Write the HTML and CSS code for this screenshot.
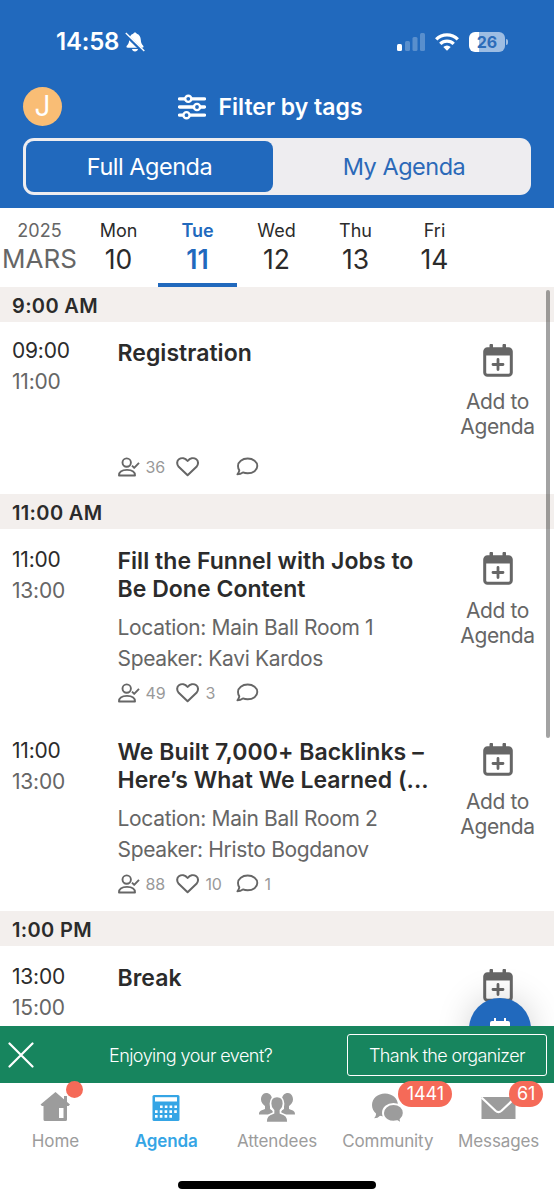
FILE: index.html
```html
<!DOCTYPE html>
<html lang="en">
<head>
    <meta charset="UTF-8">
    <title>Agenda</title>
    <link rel="stylesheet" href="styles.css">
</head>
<body>
    <!-- shared icons -->
    <svg class="sprite">
        <symbol id="cal-add" viewBox="0 0 30 34">
            <path d="M7 1.500h2.500v4.500H7zM20 1.500h2.500v4.500H20z" stroke="currentColor" stroke-width="1"/>
            <rect x="1.700" y="5.700" width="26.600" height="26.600" rx="2.800" fill="none" stroke="currentColor" stroke-width="3"/>
            <path d="M1.500 6h27v6.500h-27z"/>
            <path d="M15 16.500v10M10 21.500h10" stroke="currentColor" stroke-width="2.800" stroke-linecap="round"/>
        </symbol>
        <symbol id="person" viewBox="0 0 22 20">
            <g fill="none" stroke="currentColor" stroke-width="1.900" stroke-linejoin="round">
                <circle cx="8.700" cy="5.600" r="4.200"/>
                <path d="M1 18.500c0-3.800 3-5.600 8-5.600s8 1.800 8 5.600z"/>
                <path d="M14 8.700l2.200 2.200 4.800-5"/>
            </g>
        </symbol>
        <symbol id="heart" viewBox="0 0 24 20">
            <path d="M11.600 18.300L2.700 9.800C.5 7.200.8 3.800 2.900 2.300 5.600.3 9.200 1 11.600 4c2.400-3 6-3.700 8.700-1.700 2.100 1.500 2.400 4.900.2 7.500z" fill="none" stroke="currentColor" stroke-width="2" stroke-linejoin="round"/>
        </symbol>
        <symbol id="comment" viewBox="0 0 23 20">
            <path d="M11.700 1.500c5.500 0 9.600 3.300 9.600 7.400s-4.100 7.400-9.600 7.400c-1.800 0-3.400-.3-4.800-.9-1.600 1.200-3.600 1.900-5.500 1.900 1.100-1.200 1.700-2.600 1.900-4C2.500 12 2 10.500 2 8.900c0-4.100 4.200-7.400 9.700-7.400z" fill="none" stroke="currentColor" stroke-width="1.900" stroke-linejoin="round"/>
        </symbol>
    </svg>

    <header class="header">
        <div class="status">
            <span class="clock">14:58</span>
            <svg class="bell" viewBox="0 0 20 20">
                <path d="M10 .5c.9 0 1.600.6 1.700 1.300 2.600.8 4 3 4.100 6 .1 3.500 1.200 4.500 2.400 6 .8 1.100.2 2-1 2H2.800c-1.200 0-1.800-.9-1-2 1.200-1.500 2.300-2.500 2.400-6 .1-3 1.500-5.200 4.100-6C8.400 1.100 9.100.5 10 .5zM7 17h6c-.2 1.600-1.400 2.500-3 2.500S7.200 18.600 7 17z"/>
                <path d="M0 2l18.500 18" stroke="#2169bd" stroke-width="3.200"/>
                <path d="M.8 1l18.500 18" stroke="#fff" stroke-width="1.400"/>
            </svg>
            <svg class="signal" viewBox="0 0 28 18">
                <rect y="11" width="5" height="7" rx="1.500"/>
                <g opacity=".25">
                    <rect x="8" y="8" width="5" height="10" rx="1.500"/>
                    <rect x="15.500" y="4" width="5" height="14" rx="1.500"/>
                    <rect x="23" width="5" height="18" rx="1.500"/>
                </g>
            </svg>
            <svg class="wifi" viewBox="0 0 24 18">
                <g fill="none" stroke="#fff" stroke-width="3.300">
                    <path d="M1.200 6.400a15.300 15.300 0 0 1 21.600 0"/>
                    <path d="M5.300 10.800a9.500 9.500 0 0 1 13.400 0"/>
                </g>
                <path d="M8.300 14a5.300 5.300 0 0 1 7.400 0L12 17.700z"/>
            </svg>
            <span class="battery">26</span>
        </div>
        <div class="topbar">
            <span class="avatar">J</span>
            <div class="filter">
                <svg class="sliders" viewBox="0 0 28 26">
                    <path d="M1.500 4.800h25M1.500 13h25M1.500 21.200h25" stroke="#fff" stroke-width="3.300" stroke-linecap="round"/>
                    <g fill="#2169bd" stroke="#fff" stroke-width="2.400">
                        <circle cx="10.300" cy="4.800" r="3.100"/>
                        <circle cx="19" cy="13" r="3.100"/>
                        <circle cx="8.500" cy="21.200" r="3.100"/>
                    </g>
                </svg>
                <span>Filter by tags</span>
            </div>
        </div>
        <div class="switch">
            <div class="switch-item selected">Full Agenda</div>
            <div class="switch-item other">My Agenda</div>
        </div>
    </header>

    <nav class="days">
        <div class="day month"><span>2025</span><b>MARS</b></div>
        <div class="day"><span>Mon</span><b>10</b></div>
        <div class="day active"><span>Tue</span><b>11</b></div>
        <div class="day"><span>Wed</span><b>12</b></div>
        <div class="day"><span>Thu</span><b>13</b></div>
        <div class="day"><span>Fri</span><b>14</b></div>
    </nav>

    <main class="agenda">
        <h3 class="slot">9:00 AM</h3>
        <div class="session short">
            <div class="times"><div>09:00</div><div class="end">11:00</div></div>
            <div class="info">
                <h2>Registration</h2>
                <div class="stats">
                    <span><svg class="i-person"><use href="#person"/></svg>36</span>
                    <span><svg class="i-heart"><use href="#heart"/></svg></span>
                    <span><svg class="i-comment"><use href="#comment"/></svg></span>
                </div>
            </div>
            <div class="add"><svg><use href="#cal-add"/></svg>Add to<br>Agenda</div>
        </div>

        <h3 class="slot">11:00 AM</h3>
        <div class="session">
            <div class="times"><div>11:00</div><div class="end">13:00</div></div>
            <div class="info">
                <h2>Fill the Funnel with Jobs to<br>Be Done Content</h2>
                <p>Location: Main Ball Room 1</p>
                <p>Speaker: Kavi Kardos</p>
                <div class="stats">
                    <span><svg class="i-person"><use href="#person"/></svg>49</span>
                    <span><svg class="i-heart"><use href="#heart"/></svg>3</span>
                    <span><svg class="i-comment"><use href="#comment"/></svg></span>
                </div>
            </div>
            <div class="add"><svg><use href="#cal-add"/></svg>Add to<br>Agenda</div>
        </div>
        <div class="session">
            <div class="times"><div>11:00</div><div class="end">13:00</div></div>
            <div class="info">
                <h2>We Built 7,000+ Backlinks –<br>Here’s What We Learned (...</h2>
                <p>Location: Main Ball Room 2</p>
                <p>Speaker: Hristo Bogdanov</p>
                <div class="stats">
                    <span><svg class="i-person"><use href="#person"/></svg>88</span>
                    <span><svg class="i-heart"><use href="#heart"/></svg>10</span>
                    <span><svg class="i-comment"><use href="#comment"/></svg>1</span>
                </div>
            </div>
            <div class="add"><svg><use href="#cal-add"/></svg>Add to<br>Agenda</div>
        </div>

        <h3 class="slot">1:00 PM</h3>
        <div class="session">
            <div class="times"><div>13:00</div><div class="end">15:00</div></div>
            <div class="info"><h2>Break</h2></div>
            <div class="add"><svg><use href="#cal-add"/></svg></div>
        </div>

        <div class="fab">
            <svg viewBox="0 0 20 22"><path d="M4 0h2v3h8V0h2v3h2a2 2 0 0 1 2 2v15H0V5a2 2 0 0 1 2-2h2z"/></svg>
        </div>
        <div class="scrollbar"></div>
    </main>

    <div class="banner">
        <svg class="close" viewBox="0 0 26 26"><path d="M1.500 1.500l23 23M24.500 1.500l-23 23" stroke="#fff" stroke-width="2.200" stroke-linecap="round"/></svg>
        <span class="question">Enjoying your event?</span>
        <button class="thank">Thank the organizer</button>
    </div>

    <footer class="tabs">
        <div class="tab">
            <svg viewBox="0 0 44 36">
                <path d="M22.500 4L37 16.500 35.500 18H34v13.500a1.500 1.500 0 0 1-1.500 1.500H12a1.500 1.500 0 0 1-1.500-1.500V18H9l-1.500-1.500zM31 8h3v9h-3z"/>
                <path d="M26 20h4.500v10H26z" fill="#fff"/>
            </svg>
            <span>Home</span>
            <i class="badge dot"></i>
        </div>
        <div class="tab active">
            <svg viewBox="0 0 44 36">
                <rect x="8.500" y="7" width="27" height="26" rx="1.500"/>
                <path d="M11 9.200h22v4.300H11z" fill="#fff"/>
                <path d="M16 18.800h17M11 23.600h22M11 28.400h17" stroke="#fff" stroke-width="2.600" stroke-dasharray="2.600 2.200"/>
            </svg>
            <span>Agenda</span>
        </div>
        <div class="tab">
            <svg viewBox="0 0 44 36">
                <path d="M11 5c3.600 0 6 2.600 6 6.500 0 3-1 5-2 6.500v3l4 2.500v3H4c0-3 .5-3.500 6-5.500v-3c-2-1.500-4-3.500-4-6.500C6 8 8 5 11 5z"/>
                <path d="M33 5c-3.600 0-6 2.600-6 6.500 0 3 1 5 2 6.500v3l-4 2.500v3h15c0-3-.5-3.500-6-5.500v-3c2-1.500 4-3.500 4-6.500C38 8 36 5 33 5z"/>
                <path d="M22 8.500c4.200 0 6.500 3 6.500 7 0 3-1.200 5.500-3 7v2.500c5.500 2.200 7.500 3 7.500 9.500H11c0-6.500 2-7.300 7.500-9.500v-2.500c-1.800-1.500-3-4-3-7 0-4 2.300-7 6.500-7z" stroke="#fff" stroke-width="1.700"/>
            </svg>
            <span>Attendees</span>
        </div>
        <div class="tab">
            <svg viewBox="0 0 44 36">
                <path d="M19 5.500c7.300 0 13 5 13 11.500s-5.700 11.500-13 11.500c-2 0-3.500-.2-5-.7-1.500 1.700-3.300 2.500-6 2.500 1.400-1.300 2.200-3 2-4.800C7.500 23.500 6 20.500 6 17 6 10.500 11.700 5.500 19 5.500z"/>
                <path d="M27.500 16c6 0 10.300 4 10.300 9 0 2.800-1.200 5-3.200 6.500 0 1.500.7 2.700 2 3.800-2.300-.1-4-.8-5.300-2-8 2-14.300-2.300-14.300-8.300 0-5 4.500-9 10.500-9z" stroke="#fff" stroke-width="2"/>
            </svg>
            <span>Community</span>
            <i class="badge wide">1441</i>
        </div>
        <div class="tab">
            <svg viewBox="0 0 44 36">
                <path d="M4.500 9h34v22h-34z"/>
                <path d="M4.500 9.500l14 13.300q3 2.700 6 0L38.500 9.500" fill="none" stroke="#fff" stroke-width="2.200"/>
            </svg>
            <span>Messages</span>
            <i class="badge">61</i>
        </div>
    </footer>
    <div class="home-bar"></div>
</body>
</html>
```
FILE: styles.css
```css
* {
    box-sizing: border-box;
}
body {
    margin: 0;
    width: 554px;
    height: 1200px;
    overflow: hidden;
    display: flex;
    flex-direction: column;
    background: #fff;
    color: #2b2b2b;
    font-family: Inter, "Liberation Sans", sans-serif;
}
svg {
    fill: currentColor;
    flex: none;
}
.sprite {
    position: absolute;
    width: 0;
    height: 0;
}
h2, h3, p {
    margin: 0;
}

/* header */
.header {
    height: 208px;
    flex: none;
    padding: 0 23px;
    background: #2169bd;
    color: #fff;
}
.status {
    display: flex;
    align-items: center;
    height: 83px;
    padding: 0 24px 0 33px;
}
.clock {
    font-size: 24px;
    font-weight: 600;
    width: 68px;
    letter-spacing: -0.2px;
}
.bell {
    width: 20px;
    height: 20px;
    margin-left: 1px;
}
.signal {
    width: 28px;
    height: 18px;
    margin-left: auto;
}
.wifi {
    width: 24px;
    height: 18px;
    margin-left: 10px;
}
.battery {
    position: relative;
    width: 36px;
    height: 20px;
    margin: 0 2px 0 10px;
    border-radius: 6px;
    background: linear-gradient(90deg, #fff 10px, #9dbde3 10px);
    color: #2c6cb9;
    font-size: 16px;
    font-weight: 700;
    line-height: 20px;
    text-align: center;
}
.battery::after {
    content: "";
    position: absolute;
    left: 37px;
    top: 7px;
    width: 2px;
    height: 6px;
    border-radius: 0 2px 2px 0;
    background: #9dbde3;
}
.topbar {
    display: grid;
    grid-template-columns: 40px 1fr 40px;
    align-items: center;
    height: 48px;
}
.avatar {
    width: 39px;
    height: 39px;
    margin-top: -1px;
    border-radius: 50%;
    background: #f9bd75;
    font-size: 28px;
    line-height: 39px;
    text-align: center;
}
.filter {
    display: flex;
    align-items: center;
    justify-content: center;
    gap: 12px;
    margin-right: 13px;
    font-size: 23px;
    font-weight: 600;
}
.sliders {
    width: 28px;
    height: 26px;
}
.switch {
    display: flex;
    height: 57px;
    margin-top: 7px;
    padding: 3px;
    border-radius: 11px;
    background: #eeedf0;
    color: #2b69b8;
}
.switch-item {
    flex: 1;
    border-radius: 8px;
    font-size: 23.5px;
    letter-spacing: -0.5px;
    line-height: 52px;
    text-align: center;
}
.selected {
    flex: none;
    width: 247px;
    background: #2169bd;
    color: #fff;
}
.other {
    padding-left: 7px;
}

/* day picker */
.days {
    display: flex;
    flex: none;
    height: 79px;
}
.day {
    width: 79px;
    padding-top: 11px;
    border-bottom: 4px solid transparent;
    text-align: center;
    white-space: nowrap;
}
.day span {
    display: block;
    font-size: 18px;
    line-height: 23px;
}
.day b {
    display: block;
    font-size: 26.5px;
    font-weight: 400;
    line-height: 34px;
}
.month {
    color: #666;
}
.day.month b {
    font-size: 26px;
}
.day.active {
    border-color: #2169bd;
    color: #2169bd;
}
.active span, .day.active b {
    font-weight: 600;
}

/* sessions */
.agenda {
    position: relative;
    flex: none;
    height: 739px;
    overflow: hidden;
}
.slot {
    height: 35px;
    padding-left: 12px;
    background: #f3efed;
    font-size: 20px;
    font-weight: 600;
    letter-spacing: 0.35px;
    line-height: 38px;
}
.session {
    display: flex;
    height: 191px;
    padding-top: 18px;
}
.short {
    height: 172px;
    padding-top: 17px;
}
.times {
    width: 117.5px;
    margin-top: -3px;
    padding-left: 12px;
    font-size: 21px;
    letter-spacing: -0.2px;
    line-height: 31px;
}
.short .times {
    margin-top: -4px;
}
.end, .info p, .add {
    color: #666;
}
.info {
    display: flex;
    flex-direction: column;
    width: 340.5px;
    padding-bottom: 16px;
    white-space: nowrap;
}
.info h2 {
    margin-bottom: 9px;
    font-size: 23px;
    font-weight: 600;
    letter-spacing: 0.04px;
    line-height: 28px;
}
.info p {
    font-size: 21px;
    letter-spacing: -0.33px;
    line-height: 31px;
}
.stats {
    display: grid;
    grid-template-columns: 58px 60px 60px;
    margin-top: auto;
    color: #999;
    font-size: 16px;
    letter-spacing: -0.2px;
}
.stats span {
    display: flex;
    align-items: center;
    gap: 6px;
    height: 22px;
}
.stats svg {
    height: 20px;
    color: #666;
}
.i-person {
    width: 22px;
}
.i-heart {
    width: 24px;
}
.i-comment {
    width: 23px;
}
.add {
    width: 79px;
    padding-top: 4px;
    font-size: 21px;
    letter-spacing: -0.4px;
    line-height: 25px;
    text-align: center;
}
.add svg {
    display: block;
    width: 30px;
    height: 34px;
    margin: 0 auto 13px;
}
.short .add svg {
    margin-bottom: 12px;
}
.fab {
    position: absolute;
    left: 469px;
    top: 711px;
    width: 62px;
    height: 62px;
    border-radius: 50%;
    background: #2169bd;
    box-shadow: 0 0 34px rgba(0, 0, 0, 0.18);
    color: #fff;
}
.fab svg {
    display: block;
    width: 20px;
    height: 22px;
    margin: 20px auto 0;
}
.scrollbar {
    position: absolute;
    top: 3px;
    right: 4px;
    width: 4.5px;
    height: 448px;
    border-radius: 2px;
    background: rgba(0, 0, 0, 0.36);
}

/* banner */
.banner {
    display: flex;
    align-items: center;
    flex: none;
    height: 57px;
    padding: 0 7px 0 8px;
    background: #17855e;
    color: #fff;
    font-weight: 300;
}
.close {
    width: 26px;
    height: 26px;
}
.question {
    margin-left: 75px;
    padding-top: 1px;
    font-size: 18px;
    letter-spacing: -0.55px;
}
.thank {
    width: 200px;
    height: 42px;
    margin-left: auto;
    padding: 1px 0 0;
    border: 1.5px solid #fff;
    border-radius: 3px;
    background: none;
    color: #fff;
    font: inherit;
    font-size: 18px;
    letter-spacing: -0.6px;
}

/* tab bar */
.tabs {
    display: flex;
    flex: none;
    height: 98px;
}
.tab {
    position: relative;
    display: flex;
    flex: 1;
    flex-direction: column;
    align-items: center;
    padding-top: 5px;
    color: #9c9c9c;
    font-size: 17px;
    letter-spacing: -0.1px;
}
.tab.active {
    color: #35a5e5;
}
.tab svg {
    width: 44px;
    height: 36px;
}
.tab span {
    margin-top: 7px;
    line-height: 20px;
}
.badge {
    position: absolute;
    left: 66px;
    top: -2px;
    width: 34px;
    height: 26px;
    border-radius: 13px;
    background: #f56a58;
    color: #fff;
    font-size: 18px;
    font-style: normal;
    line-height: 26px;
    text-align: center;
}
.wide {
    width: 54px;
}
.dot {
    width: 17px;
    height: 17px;
}
.home-bar {
    width: 198px;
    height: 8px;
    margin: 0 auto;
    border-radius: 4px;
    background: #000;
}
```
